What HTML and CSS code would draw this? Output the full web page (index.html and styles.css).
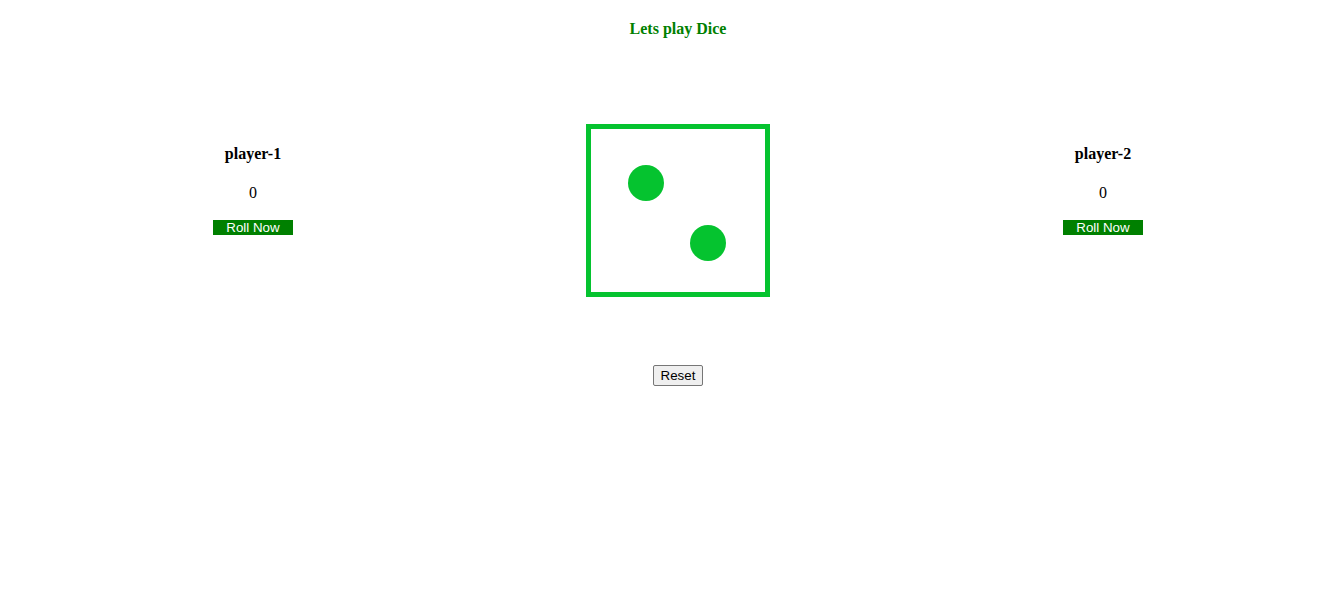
FILE: index.html
```html
<!DOCTYPE html>
<html>
<head>
<meta charset="utf-8">
<link rel="stylesheet" href="styles.css">
<title>Dice</title>
</head>
<body>
<div class="page">
  <h1 class="title">Lets play Dice</h1>
  <div class="game">
    <div class="player">
      <div class="name">player-1</div>
      <div class="score">0</div>
      <button class="roll">Roll Now</button>
    </div>
    <div class="dice-col">
      <div class="dice">
        <span class="pip pip-a"></span>
        <span class="pip pip-b"></span>
      </div>
    </div>
    <div class="player">
      <div class="name">player-2</div>
      <div class="score">0</div>
      <button class="roll">Roll Now</button>
    </div>
  </div>
  <div class="controls">
    <button class="reset">Reset</button>
  </div>
</div>
</body>
</html>
```

FILE: styles.css
```css
html, body {
  margin: 0;
  padding: 0;
  background: #fff;
}
body {
  font-family: "Liberation Serif", "Times New Roman", serif;
  font-size: 16px;
  color: #000;
}
.page {
  width: 1275px;
  margin-left: 40.5px;
}
.title {
  margin: 0;
  padding-top: 20px;
  font-size: 16px;
  line-height: 18px;
  font-weight: bold;
  color: #008000;
  text-align: center;
}
.game {
  display: grid;
  grid-template-columns: repeat(3, 425px);
  margin-top: 86px;
}
.player {
  display: flex;
  flex-direction: column;
  align-items: center;
  padding-top: 21px;
}
.name {
  font-weight: bold;
  line-height: 18px;
}
.score {
  margin-top: 21px;
  line-height: 18px;
}
.roll {
  margin-top: 18px;
  width: 80px;
  height: 15px;
  padding: 0;
  border: none;
  background: #008000;
  color: #fff;
  font-family: "Liberation Sans", Arial, sans-serif;
  font-size: 13.33px;
  line-height: 15px;
}
.dice-col {
  display: flex;
  justify-content: center;
}
.dice {
  position: relative;
  box-sizing: border-box;
  width: 184px;
  height: 173px;
  border: 5px solid #05c32f;
}
.pip {
  position: absolute;
  width: 36px;
  height: 36px;
  border-radius: 50%;
  background: #05c32f;
}
.pip-a {
  left: 37px;
  top: 36px;
}
.pip-b {
  left: 99px;
  top: 96px;
}
.controls {
  margin-top: 68px;
  text-align: center;
}
.reset {
  font-family: "Liberation Sans", Arial, sans-serif;
  font-size: 13.33px;
  line-height: 15px;
  padding: 2px 7px;
  border: 1px solid #767676;
  border-radius: 2px;
  background: #efefef;
  color: #000;
}
```
